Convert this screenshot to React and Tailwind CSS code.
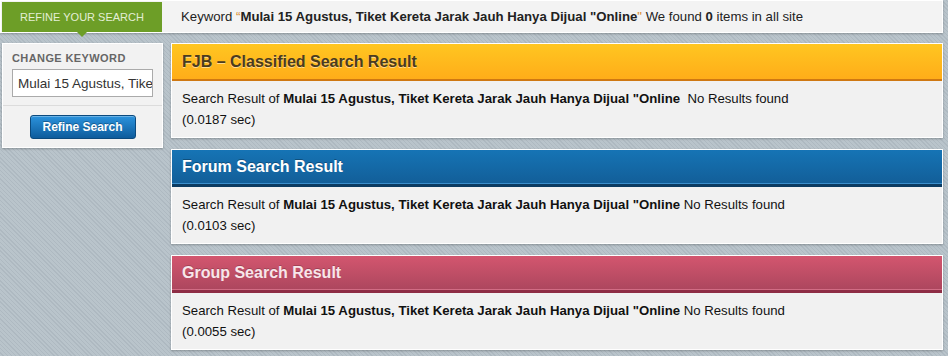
const keyword = 'Mulai 15 Agustus, Tiket Kereta Jarak Jauh Hanya Dijual "Online';

const panels = [
  {
    title: "FJB – Classified Search Result",
    head: "bg-[linear-gradient(#ffc621,#ffad19)] text-[#4a3b1f] [text-shadow:0_1px_0_rgba(255,255,255,0.5)]",
    line: "border-b-2 border-[#cf7812]",
    time: "0.0187",
    gap: "\u00a0 ",
  },
  {
    title: "Forum Search Result",
    head: "bg-[linear-gradient(#1674b5,#125e98)] text-white [text-shadow:0_-1px_0_rgba(0,0,0,0.3)]",
    line: "border-b-[3px] border-[#0b3b61] shadow-[inset_0_-1px_0_#3a8fcd]",
    time: "0.0103",
    gap: " ",
  },
  {
    title: "Group Search Result",
    head: "bg-[linear-gradient(#d3566f,#ac465e)] text-[#f8e6ea] [text-shadow:0_-1px_0_rgba(0,0,0,0.2)]",
    line: "border-b-[3px] border-[#8e2d45] shadow-[inset_0_-1px_0_#d26c84]",
    time: "0.0055",
    gap: " ",
  },
];

function ResultPanel({ p }) {
  return (
    <div className="border border-white bg-[#f1f1f1] shadow-[0_1px_2px_rgba(0,0,0,0.25)]">
      <div className={`flex h-[37px] items-center pl-[10px] text-[16px] font-bold ${p.head} ${p.line}`}>
        {p.title}
      </div>
      <div className="px-[10px] pb-[7px] pt-[7px] text-[13.2px] leading-[21px] text-[#111]">
        <div>
          Search Result of <b>{keyword}</b>
          {p.gap}No Results found
        </div>
        <div>({p.time} sec)</div>
      </div>
    </div>
  );
}

export default function App() {
  return (
    <div
      className="h-[356px] w-[948px] overflow-hidden bg-[repeating-linear-gradient(45deg,#b9c4cb_0px,#b9c4cb_2px,#aeb9c1_2px,#aeb9c1_3px)]"
      style={{ fontFamily: '"Liberation Sans", Arial, sans-serif' }}
    >
      {/* top bar */}
      <div className="flex h-[33px] w-[943px] items-stretch border border-white bg-[#f3f3f3] pl-[1px] pt-[1px] shadow-[0_1px_2px_rgba(0,0,0,0.25)]">
        <div className="relative flex w-[160px] items-center justify-center bg-[#6d9e27] text-[11px] text-[#e4eed6]">
          REFINE YOUR SEARCH
          <div className="absolute left-[75px] top-full h-0 w-0 border-x-[5px] border-t-[5px] border-x-transparent border-t-[#6d9e27]" />
        </div>
        <div className="flex items-center pl-[19px] text-[13.2px] text-[#222]">
          Keyword&nbsp;<span className="text-[#d98a2a]">“</span>
          <b>{keyword}</b>
          <span className="text-[#d98a2a]">"</span>&nbsp;We found&nbsp;<b>0</b>&nbsp;items in all site
        </div>
      </div>

      <div className="mt-[10px] flex items-start gap-[8px] pl-[2px]">
        {/* sidebar */}
        <div className="w-[161px] border border-white bg-[#f2f2f2] shadow-[0_1px_2px_rgba(0,0,0,0.25)]">
          <div className="px-[9px] pt-[8px]">
            <div className="text-[11px] font-bold leading-[13px] tracking-[0.4px] text-[#666]">CHANGE KEYWORD</div>
            <input
              readOnly
              value="Mulai 15 Agustus, Tiket Kereta Jarak Jauh Hanya Dijual"
              className="mt-[4px] block h-[28px] w-[141px] border border-[#aaa] bg-white pl-[5px] text-[13.5px] text-[#333] outline-none"
            />
          </div>
          <div className="mt-[8px] border-t border-[#dcdcdc] shadow-[inset_0_1px_0_#fff]" />
          <div className="flex justify-center pb-[8px] pt-[9px]">
            <button className="h-[24px] w-[106px] rounded-[3px] border border-[#0b4a7e] bg-[linear-gradient(#2b93dd,#0e5c9c)] text-[12px] font-bold text-white shadow-[inset_0_1px_0_rgba(255,255,255,0.3)] [text-shadow:0_-1px_0_rgba(0,0,0,0.3)]">
              Refine Search
            </button>
          </div>
        </div>

        {/* results */}
        <div className="flex w-[772px] flex-col gap-[11px]">
          {panels.map((p) => (
            <ResultPanel key={p.title} p={p} />
          ))}
        </div>
      </div>
    </div>
  );
}
